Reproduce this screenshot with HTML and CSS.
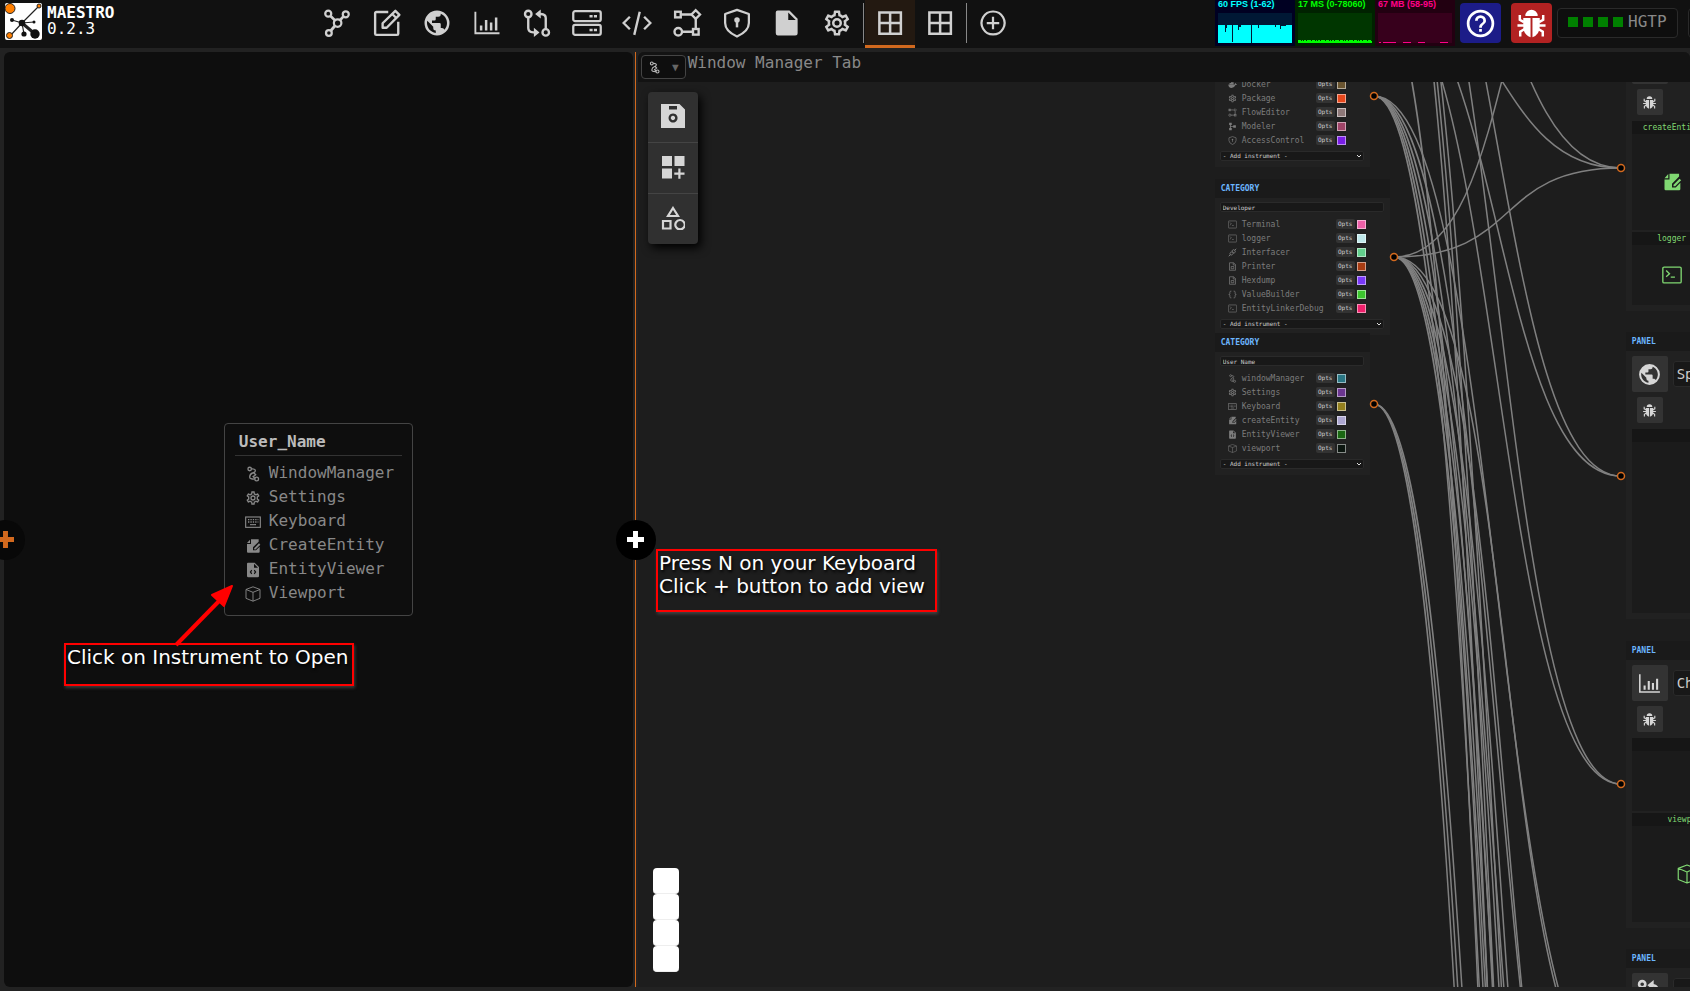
FILE: index.html
```html
<!DOCTYPE html>
<html lang="en">
<head>
    <meta charset="UTF-8">
    <meta name="viewport" content="width=device-width, initial-scale=1.0">
    <title>Maestro</title>
    <link rel="stylesheet" href="styles.css">
</head>
<body>
    <!-- icon set -->
    <svg class="defs" aria-hidden="true">
        <symbol id="i-graph" viewBox="0 0 24 24"><g fill="none" stroke="currentColor" stroke-width="1.8"><circle cx="5" cy="4.5" r="2.4"/><circle cx="19" cy="5" r="2.4"/><circle cx="12.500" cy="12" r="3"/><circle cx="5.500" cy="20" r="2.300"/><path d="M6.600 6.200l3.800 3.700M17.200 6.700l-2.700 3M10.400 14.200l-3.400 4" stroke-width="2.200"/></g></symbol>
        <symbol id="i-edit" viewBox="0 0 24 24"><g fill="none" stroke="currentColor" stroke-width="1.9" stroke-linejoin="round"><path d="M13 3.200H3.500a1 1 0 0 0-1 1v16.300a1 1 0 0 0 1 1H20a1 1 0 0 0 1-1V11"/><path d="M8.500 15.800v-3.600L18.700 2.300l3.200 3.200-10.200 10.300zM16.200 4.800l3.200 3.200"/></g></symbol>
        <symbol id="i-earth" viewBox="0 0 24 24"><path fill="currentColor" d="M17.9,17.39C17.64,16.59 16.89,16 16,16H15V13A1,1 0 0,0 14,12H8V10H10A1,1 0 0,0 11,9V7H13A2,2 0 0,0 15,5V4.59C17.93,5.77 20,8.64 20,12C20,14.08 19.2,15.97 17.9,17.39M11,19.93C7.05,19.44 4,16.08 4,12C4,11.38 4.08,10.78 4.21,10.21L9,15V16A2,2 0 0,0 11,18M12,2A10,10 0 0,0 2,12A10,10 0 0,0 12,22A10,10 0 0,0 22,12A10,10 0 0,0 12,2Z"/></symbol>
        <symbol id="i-chart" viewBox="0 0 24 24"><path fill="none" stroke="currentColor" stroke-width="1.5" d="M2.700 3v17.200H22"/><path fill="none" stroke="currentColor" stroke-width="2" d="M7.300 18v-4M11.300 18V9.500M15.300 18v-6.500M19.300 18V7.500"/></symbol>
        <symbol id="i-compare" viewBox="0 0 24 24"><g fill="none" stroke="currentColor" stroke-width="1.9"><circle cx="5" cy="4.800" r="2.600"/><circle cx="19" cy="19.500" r="2.600"/><path d="M5 7.500v8.500q0 3.300 4 3.500h2M19 16.700V8q0-3-4-3.200h-2"/></g><path fill="currentColor" d="M9.500 15.800l4.500 3.700-4.500 3.700zM15 1.200v7.200l-4.500-3.600z"/></symbol>
        <symbol id="i-server" viewBox="0 0 24 24"><g fill="none" stroke="currentColor" stroke-width="1.8"><rect x="1" y="2.500" width="22" height="8" rx="1.500"/><rect x="1" y="13.500" width="22" height="8" rx="1.500"/></g><path fill="currentColor" d="M14 5.500h2.500v2H14zM17.500 5.500H20v2h-2.500zM14 16.500h2.500v2H14zM17.500 16.500H20v2h-2.500z"/></symbol>
        <symbol id="i-code" viewBox="0 0 24 24"><path fill="none" stroke="currentColor" stroke-width="1.900" d="M6.300 7L1.300 12l5 5M17.700 7l5 5-5 5M14.200 3L9.800 21.500"/></symbol>
        <symbol id="i-flow" viewBox="0 0 24 24"><g fill="none" stroke="currentColor" stroke-width="1.900"><rect x="2.500" y="3" width="4.500" height="4.500"/><path d="M19 1.800l3.400 3.400L19 8.600l-3.400-3.400z"/><circle cx="5" cy="19" r="3"/><rect x="16.800" y="16.800" width="4.500" height="4.500"/><path d="M7 5.200h8.600M19 8.600v8.200M8 19h8.800"/></g></symbol>
        <symbol id="i-shield" viewBox="0 0 24 24"><path fill="none" stroke="currentColor" stroke-width="1.800" stroke-linejoin="round" d="M12 1.500l9.500 3.300v7.200q0 6.500-9.500 10.800Q2.500 18.500 2.500 12V4.800z"/><circle cx="12" cy="9.500" r="2.200" fill="currentColor"/><path fill="currentColor" d="M11 11h2v4.500h-2z"/></symbol>
        <symbol id="i-file" viewBox="0 0 24 24"><path fill="currentColor" fill-rule="evenodd" d="M4.500 2h9.500l6.500 6.500V20a2 2 0 0 1-2 2h-14a2 2 0 0 1-1.500-2V3.500A1.500 1.500 0 0 1 4.500 2zM13 3.500V9.500h6z"/></symbol>
        <symbol id="i-cog" viewBox="0 0 24 24"><path fill="currentColor" d="M12,8A4,4 0 0,1 16,12A4,4 0 0,1 12,16A4,4 0 0,1 8,12A4,4 0 0,1 12,8M12,10A2,2 0 0,0 10,12A2,2 0 0,0 12,14A2,2 0 0,0 14,12A2,2 0 0,0 12,10M10,22C9.75,22 9.54,21.82 9.5,21.58L9.13,18.93C8.5,18.68 7.96,18.34 7.44,17.94L4.95,18.95C4.73,19.03 4.46,18.95 4.34,18.73L2.34,15.27C2.21,15.05 2.27,14.78 2.46,14.63L4.57,12.97L4.5,12L4.57,11L2.46,9.37C2.27,9.22 2.21,8.95 2.34,8.73L4.34,5.27C4.46,5.05 4.73,4.96 4.95,5.05L7.44,6.05C7.96,5.66 8.5,5.32 9.13,5.07L9.5,2.42C9.54,2.18 9.75,2 10,2H14C14.25,2 14.46,2.18 14.5,2.42L14.87,5.07C15.5,5.32 16.04,5.66 16.56,6.05L19.05,5.05C19.27,4.96 19.54,5.05 19.66,5.27L21.66,8.73C21.79,8.95 21.73,9.22 21.54,9.37L19.43,11L19.5,12L19.43,13L21.54,14.63C21.73,14.78 21.79,15.05 21.66,15.27L19.66,18.73C19.54,18.95 19.27,19.04 19.05,18.95L16.56,17.95C16.04,18.34 15.5,18.68 14.87,18.93L14.5,21.58C14.46,21.82 14.25,22 14,22H10M11.25,4L10.88,6.61C9.68,6.86 8.62,7.5 7.85,8.39L5.44,7.35L4.69,8.65L6.8,10.2C6.4,11.37 6.4,12.64 6.8,13.8L4.68,15.36L5.43,16.66L7.86,15.62C8.63,16.5 9.68,17.14 10.87,17.38L11.24,20H12.76L13.13,17.39C14.32,17.14 15.37,16.5 16.14,15.62L18.57,16.66L19.32,15.36L17.2,13.81C17.6,12.64 17.6,11.37 17.2,10.2L19.31,8.65L18.56,7.35L16.15,8.39C15.38,7.5 14.32,6.86 13.12,6.62L12.75,4H11.25Z"/></symbol>
        <symbol id="i-grid" viewBox="0 0 24 24"><path fill="none" stroke="currentColor" stroke-width="2" d="M3.500 3.500h17.200v17H3.500zM12.100 3.500v17M3.500 12h17.200"/></symbol>
        <symbol id="i-add" viewBox="0 0 24 24"><path fill="none" stroke="currentColor" stroke-width="1.800" d="M12 7v10M7 12h10M12 2.800a9.200 9.200 0 1 0 .1 0z"/></symbol>
        <symbol id="i-help" viewBox="0 0 24 24"><path fill="currentColor" d="M11,18H13V16H11V18M12,2A10,10 0 0,0 2,12A10,10 0 0,0 12,22A10,10 0 0,0 22,12A10,10 0 0,0 12,2M12,20C7.59,20 4,16.41 4,12C4,7.59 7.59,4 12,4C16.41,4 20,7.59 20,12C20,16.41 16.41,20 12,20M12,6A4,4 0 0,0 8,10H10A2,2 0 0,1 12,8A2,2 0 0,1 14,10C14,12 11,11.75 11,15H13C13,12.75 16,12.5 16,10A4,4 0 0,0 12,6Z"/></symbol>
        <symbol id="i-bug" viewBox="0 0 24 24"><path fill="currentColor" d="M7.500 6.500a4.500 4.500 0 0 1 9 0zM6 8h5.300v14Q6 20 6 14zM18 8h-5.300v14Q18 20 18 14z"/><path fill="none" stroke="currentColor" stroke-width="1.800" d="M6.500 11L3.500 9.300V5.800M17.500 11l3-1.700V5.800M6.500 13.500H1.800M17.500 13.500h4.700M7 16l-3.200 2v3.500M17 16l3.200 2v3.500"/></symbol>
        <symbol id="i-winmgr" viewBox="0 0 24 24"><g fill="none" stroke="currentColor" stroke-width="2"><circle cx="7" cy="4.500" r="2.600"/><circle cx="17.500" cy="19.500" r="2.800"/><path d="M9.500 4.500q6-.5 6 2.500 0 2.500-4 3.500T7 16.500q0 3.500 7.500 3.300M12.500 9.500l3.500 3.500-3.500 3M11.500 15l3.500 4"/></g></symbol>
        <symbol id="i-keyboard" viewBox="0 0 24 24"><rect x="1" y="4.500" width="22" height="15.500" fill="none" stroke="currentColor" stroke-width="1.700"/><path stroke="currentColor" stroke-width="2" stroke-dasharray="2 1.600" d="M4.500 8.500h15.500M4.500 12h15.500"/><path stroke="currentColor" stroke-width="1.700" d="M7.500 16h9"/></symbol>
        <symbol id="i-create" viewBox="0 0 24 24"><path fill="currentColor" d="M9 2h11.500v3.500L12 14v4.500h4.500L22 13v7.500a1.500 1.500 0 0 1-1.500 1.500h-16A1.500 1.500 0 0 1 3 20.500V9h6zM7.500 2.500v5H3zM21 8l2 2-7.200 7.200h-2v-2z"/></symbol>
        <symbol id="i-viewer" viewBox="0 0 24 24"><path fill="currentColor" fill-rule="evenodd" d="M4.500 1h10l6.500 6.500V21a2 2 0 0 1-2 2H5a2 2 0 0 1-2-2V2.500A1.500 1.500 0 0 1 4.500 1zM13.500 2.500v6h6zM9.500 11.500L7 15l2.500 3.500 1.300-1.200L9.300 15l1.500-2.300zM14.500 11.500l-1.300 1.200 1.500 2.300-1.500 2.300 1.300 1.200L17 15z"/></symbol>
        <symbol id="i-cube" viewBox="0 0 24 24"><path fill="none" stroke="currentColor" stroke-width="1.400" stroke-linejoin="round" d="M12 1.200l10.500 4v13.300L12 22.800 1.500 18.500V5.200zM1.500 5.200L12 9.500l10.500-4.300M12 9.500v13.300"/></symbol>
        <symbol id="i-term" viewBox="0 0 24 24"><path fill="none" stroke="currentColor" stroke-width="1.600" d="M2.500 2.500h19a1.500 1.500 0 0 1 1.500 1.500v16a1.500 1.500 0 0 1-1.500 1.500h-19A1.500 1.500 0 0 1 1 20V4a1.500 1.500 0 0 1 1.500-1.500zM5 6.500l4 4-4 3.500M10.500 14.500h5"/></symbol>
        <symbol id="i-plug" viewBox="0 0 24 24"><path fill="none" stroke="currentColor" stroke-width="2.500" d="M2 22l4-4M22 2l-4 4M6 18q-2-4 1-6l2-2 5 5-2 2q-3 3-6 1zM18 6q-4-3-6 0l-2 2 6 6 2-2q3-3 0-6z"/></symbol>
        <symbol id="i-doc" viewBox="0 0 24 24"><path fill="none" stroke="currentColor" stroke-width="1.900" d="M4 2h11l5 5v15H4zM14 2v6h6M8.500 12h7v6h-7z"/></symbol>
        <symbol id="i-braces" viewBox="0 0 24 24"><path fill="none" stroke="currentColor" stroke-width="2" d="M9 3H7.500Q5 3 5 6v3q0 3-3 3 3 0 3 3v3q0 3 2.500 3H9M15 3h1.500Q19 3 19 6v3q0 3 3 3-3 0-3 3v3q0 3-2.500 3H15"/></symbol>
        <symbol id="i-docker" viewBox="0 0 24 24"><path fill="currentColor" d="M1 12h17q0-3 1.500-4 2 1 2 3 1.500-.5 2.500 0-1 2.500-4 2.500-3 7.500-10.500 7.500Q1 21 1 12zM4 8h11v3H4zM8 4h7v3H8z"/></symbol>
        <symbol id="i-modeler" viewBox="0 0 24 24"><path fill="currentColor" d="M3 2h7v6H7.500v3H14V8.500h7v7h-7V13H7.500v3H10v6H3v-6h2V8H3z"/></symbol>
        <symbol id="i-save" viewBox="0 0 24 24"><path fill="currentColor" fill-rule="evenodd" d="M0 0h18.500L24 5.500V24H0zM8 2v3.500h8V2zM12 9.500a4.500 4.500 0 1 0 .1 0zM12 11.800a2.200 2.200 0 1 1-.1 0z"/></symbol>
        <symbol id="i-widgets" viewBox="0 0 24 24"><path fill="currentColor" d="M1 1h10v10H1zM13.500 1h10v10h-10zM1 13.500h10v10H1zM17.300 13.500h2.200v4h4v2.200h-4v4h-2.200v-4h-4v-2.200h4z"/></symbol>
        <symbol id="i-shapes" viewBox="0 0 24 24"><path fill="none" stroke="currentColor" stroke-width="2.200" d="M12 2L17 10H7zM2 15h7.500v7.500H2zM19 14a4.700 4.700 0 1 0 .1 0z"/></symbol>
        <symbol id="i-plus" viewBox="0 0 24 24"><path fill="currentColor" d="M8.500 0h7v8.500H24v7h-8.500V24h-7v-8.500H0v-7h8.500z"/></symbol>
        <symbol id="i-merge" viewBox="0 0 24 24"><g fill="none" stroke="currentColor" stroke-width="2.500"><circle cx="5" cy="5" r="3"/><path d="M5 8v14M13 6h2q5 0 5 7v9"/></g><path fill="currentColor" d="M16 1v10l-6-5z"/></symbol>
    </svg>

    <header class="topbar">
        <div class="brand">
            <svg class="logo" viewBox="0 0 37 37">
                <rect width="37" height="37" rx="2" fill="#fff"/>
                <g stroke="#222" stroke-width="1.200"><path d="M17 20L34 3M17 20L5 33M17 20L7 17M17 20l12-1M17 20l2 11"/><path d="M17 20l13 11" stroke-width="3"/></g>
                <circle cx="17" cy="20" r="3.300" fill="#111"/><circle cx="30" cy="31" r="4.700" fill="#111"/><circle cx="19" cy="31" r="2.600" fill="#111"/><circle cx="7" cy="17" r="2" fill="#111"/><circle cx="29" cy="19" r="1.500" fill="#111"/>
                <g fill="#ff7f00" stroke="#222"><circle cx="5" cy="5.500" r="5"/><circle cx="34" cy="3" r="2"/><circle cx="4.500" cy="32.500" r="3"/></g>
            </svg>
            <div class="brand-text"><strong>MAESTRO</strong><span>0.2.3</span></div>
        </div>
        <nav class="tabs">
            <button class="tab" aria-label="Graph"><svg><use href="#i-graph"/></svg></button>
            <button class="tab" aria-label="Editor"><svg><use href="#i-edit"/></svg></button>
            <button class="tab" aria-label="Spatial"><svg><use href="#i-earth"/></svg></button>
            <button class="tab" aria-label="Charts"><svg><use href="#i-chart"/></svg></button>
            <button class="tab" aria-label="Compare"><svg><use href="#i-compare"/></svg></button>
            <button class="tab" aria-label="Servers"><svg><use href="#i-server"/></svg></button>
            <button class="tab" aria-label="Code"><svg><use href="#i-code"/></svg></button>
            <button class="tab" aria-label="Flow"><svg><use href="#i-flow"/></svg></button>
            <button class="tab" aria-label="Access"><svg><use href="#i-shield"/></svg></button>
            <button class="tab" aria-label="File"><svg><use href="#i-file"/></svg></button>
            <button class="tab" aria-label="Settings"><svg><use href="#i-cog"/></svg></button>
            <span class="sep"></span>
            <button class="tab active" aria-label="Window 1"><svg><use href="#i-grid"/></svg></button>
            <button class="tab" aria-label="Window 2"><svg><use href="#i-grid"/></svg></button>
            <span class="sep"></span>
            <button class="tab" aria-label="Add tab"><svg><use href="#i-add"/></svg></button>
        </nav>
        <div class="tools">
            <div class="stats">
                <div class="stat fps"><span>60 FPS (1-62)</span>
                    <svg viewBox="0 0 74 30"><path fill="currentColor" d="M0 12h7v7h1v-4h1v-3h5v17h1V12h5v5h1v-3h2v-2h10v18h1V12h6v3h1v-3h16v2h1v-2h4v4h1v-3h5v-1h6v18H0z"/></svg></div>
                <div class="stat ms"><span>17 MS (0-78060)</span>
                    <svg viewBox="0 0 74 30"><path fill="currentColor" d="M0 28h74v2H0z"/><path stroke="currentColor" stroke-dasharray="3 1 1 1 2 1 4 1" d="M0 27.500h74"/></svg></div>
                <div class="stat mb"><span>67 MB (58-95)</span>
                    <svg viewBox="0 0 74 30"><path fill="currentColor" d="M1 29h2v1H1zM5 29h13v1H5zM25 29h8v1h-8zM40 29h7v1h-7zM62 29h8v1h-8z"/></svg></div>
            </div>
            <button class="tool help" aria-label="Help"><svg><use href="#i-help"/></svg></button>
            <button class="tool bug" aria-label="Report bug"><svg><use href="#i-bug"/></svg></button>
            <div class="link"><i></i><i></i><i></i><i></i><span>HGTP</span></div>
            <div class="link more"></div>
        </div>
    </header>

    <main class="views">
        <section class="view empty">
            <div class="menu">
                <h2>User_Name</h2>
                <ul>
                    <li><a href="#"><svg><use href="#i-winmgr"/></svg>WindowManager</a></li>
                    <li><a href="#"><svg><use href="#i-cog"/></svg>Settings</a></li>
                    <li><a href="#"><svg><use href="#i-keyboard"/></svg>Keyboard</a></li>
                    <li><a href="#"><svg><use href="#i-create"/></svg>CreateEntity</a></li>
                    <li><a href="#"><svg><use href="#i-viewer"/></svg>EntityViewer</a></li>
                    <li><a href="#"><svg><use href="#i-cube"/></svg>Viewport</a></li>
                </ul>
            </div>
            <button class="add-view start" aria-label="Add view"><svg><use href="#i-plus"/></svg></button>
        </section>
        <div class="divider">
            <button class="add-view" aria-label="Add view"><svg><use href="#i-plus"/></svg></button>
        </div>
        <section class="view manager">
            <div class="view-bar">
                <button class="picker" aria-label="Instrument"><svg><use href="#i-winmgr"/></svg><span>▼</span></button>
                <span>Window Manager Tab</span>
            </div>
            <div class="canvas">
                <svg class="wires" id="wires"></svg>

                <div class="node category" style="left:577px;top:-43px">
                    <h3>CATEGORY</h3>
                    <input class="name" aria-label="Category name" value="Admin">
                    <div class="row"><svg><use href="#i-docker"/></svg><span>Docker</span><button>Opts</button><input type="color" aria-label="Docker color" value="#6b5530"></div>
                    <div class="row"><svg><use href="#i-cog"/></svg><span>Package</span><button>Opts</button><input type="color" aria-label="Package color" value="#e8481c"></div>
                    <div class="row"><svg><use href="#i-flow"/></svg><span>FlowEditor</span><button>Opts</button><input type="color" aria-label="FlowEditor color" value="#8e7878"></div>
                    <div class="row"><svg><use href="#i-modeler"/></svg><span>Modeler</span><button>Opts</button><input type="color" aria-label="Modeler color" value="#a04468"></div>
                    <div class="row"><svg><use href="#i-shield"/></svg><span>AccessControl</span><button>Opts</button><input type="color" aria-label="AccessControl color" value="#7a1ee6"></div>
                    <select aria-label="Add instrument"><option>- Add instrument -</option></select>
                </div>

                <div class="node category wide" style="left:577px;top:97px">
                    <h3>CATEGORY</h3>
                    <input class="name" aria-label="Category name" value="Developer">
                    <div class="row"><svg><use href="#i-term"/></svg><span>Terminal</span><button>Opts</button><input type="color" aria-label="Terminal color" value="#ee60a8"></div>
                    <div class="row"><svg><use href="#i-term"/></svg><span>logger</span><button>Opts</button><input type="color" aria-label="logger color" value="#bfe8ea"></div>
                    <div class="row"><svg><use href="#i-plug"/></svg><span>Interfacer</span><button>Opts</button><input type="color" aria-label="Interfacer color" value="#62cf8c"></div>
                    <div class="row"><svg><use href="#i-doc"/></svg><span>Printer</span><button>Opts</button><input type="color" aria-label="Printer color" value="#a83c12"></div>
                    <div class="row"><svg><use href="#i-doc"/></svg><span>Hexdump</span><button>Opts</button><input type="color" aria-label="Hexdump color" value="#7a38f8"></div>
                    <div class="row"><svg><use href="#i-braces"/></svg><span>ValueBuilder</span><button>Opts</button><input type="color" aria-label="ValueBuilder color" value="#3cc62e"></div>
                    <div class="row"><svg><use href="#i-term"/></svg><span>EntityLinkerDebug</span><button>Opts</button><input type="color" aria-label="EntityLinkerDebug color" value="#f0206c"></div>
                    <select aria-label="Add instrument"><option>- Add instrument -</option></select>
                </div>

                <div class="node category" style="left:577px;top:251px">
                    <h3>CATEGORY</h3>
                    <input class="name" aria-label="Category name" value="User_Name">
                    <div class="row"><svg><use href="#i-winmgr"/></svg><span>windowManager</span><button>Opts</button><input type="color" aria-label="windowManager color" value="#2a7684"></div>
                    <div class="row"><svg><use href="#i-cog"/></svg><span>Settings</span><button>Opts</button><input type="color" aria-label="Settings color" value="#6c3690"></div>
                    <div class="row"><svg><use href="#i-keyboard"/></svg><span>Keyboard</span><button>Opts</button><input type="color" aria-label="Keyboard color" value="#94801e"></div>
                    <div class="row"><svg><use href="#i-create"/></svg><span>createEntity</span><button>Opts</button><input type="color" aria-label="createEntity color" value="#aca6d0"></div>
                    <div class="row"><svg><use href="#i-viewer"/></svg><span>EntityViewer</span><button>Opts</button><input type="color" aria-label="EntityViewer color" value="#1a6812"></div>
                    <div class="row"><svg><use href="#i-cube"/></svg><span>viewport</span><button>Opts</button><input type="color" aria-label="viewport color" value="#0c1610"></div>
                    <select aria-label="Add instrument"><option>- Add instrument -</option></select>
                </div>

                <div class="node panel" style="left:988px;top:-58px">
                    <h3>PANEL</h3>
                    <div class="panel-head"><button class="icon" aria-label="Icon"><svg><use href="#i-edit"/></svg></button><input aria-label="Panel name" value="Edit"></div>
                    <button class="debug" aria-label="Debug"><svg><use href="#i-bug"/></svg></button>
                    <div class="cell narrow tall"><h4>createEntity</h4><svg><use href="#i-create"/></svg></div>
                    <div class="cell narrow"><h4>logger</h4><svg><use href="#i-term"/></svg></div>
                </div>
                <div class="node panel" style="left:988px;top:250px">
                    <h3>PANEL</h3>
                    <div class="panel-head"><button class="icon" aria-label="Icon"><svg><use href="#i-earth"/></svg></button><input aria-label="Panel name" value="Spatial"></div>
                    <button class="debug" aria-label="Debug"><svg><use href="#i-bug"/></svg></button>
                    <div class="cell"><h4></h4></div>
                </div>
                <div class="node panel" style="left:988px;top:559px">
                    <h3>PANEL</h3>
                    <div class="panel-head"><button class="icon" aria-label="Icon"><svg><use href="#i-chart"/></svg></button><input aria-label="Panel name" value="Charts"></div>
                    <button class="debug" aria-label="Debug"><svg><use href="#i-bug"/></svg></button>
                    <div class="cell"><h4></h4></div>
                    <div class="cell tall"><h4>viewport</h4><svg><use href="#i-cube"/></svg></div>
                </div>
                <div class="node panel" style="left:988px;top:867px">
                    <h3>PANEL</h3>
                    <div class="panel-head"><button class="icon" aria-label="Icon"><svg><use href="#i-merge"/></svg></button><input aria-label="Panel name" value=""></div>
                </div>

                <div class="toolbox">
                    <button aria-label="Save"><svg><use href="#i-save"/></svg></button>
                    <button aria-label="Add panel"><svg><use href="#i-widgets"/></svg></button>
                    <button aria-label="Add category"><svg><use href="#i-shapes"/></svg></button>
                </div>
                <div class="controls">
                    <button aria-label="Zoom in"></button>
                    <button aria-label="Zoom out"></button>
                    <button aria-label="Fit view"></button>
                    <button aria-label="Lock"></button>
                </div>
            </div>
        </section>
    </main>

    <!-- help notes over the views -->
    <svg class="arrow" viewBox="0 0 64 64"><path d="M4 60L50 13" stroke="#f00" stroke-width="4"/><path d="M60 1L52 21 40 10z" fill="#f00" stroke="#f00" stroke-width="2" stroke-linejoin="round"/></svg>
    <div class="note open-note">Click on Instrument to Open</div>
    <div class="note add-note">Press N on your Keyboard<br>Click + button to add view</div>

    <script src="wires.js"></script>
</body>
</html>
```
FILE: styles.css
```css
* {
    box-sizing: border-box;
}
body {
    margin: 0;
    height: 100vh;
    display: flex;
    flex-direction: column;
    background: #222;
    color: #fff;
    font-family: 'DejaVu Sans Mono', monospace;
    font-size: 16px;
    overflow: hidden;
}
button, input, select {
    font-family: inherit;
    margin: 0;
    padding: 0;
    border: 0;
    color: inherit;
}
h2, h3, h4, ul {
    margin: 0;
    padding: 0;
}
.defs {
    display: none;
}

/* top bar */
.topbar {
    flex: none;
    height: 48px;
    display: flex;
    background: #111;
    overflow: hidden;
}
.brand {
    display: flex;
    gap: 5px;
    padding: 3px 1px 0 5px;
}
.logo {
    width: 37px;
    height: 37px;
}
.brand-text {
    display: flex;
    flex-direction: column;
    line-height: 16px;
    padding-top: 2px;
}
.tabs {
    flex: 1;
    display: flex;
    justify-content: center;
}
.tab {
    width: 50px;
    height: 48px;
    display: grid;
    place-items: center;
    background: none;
    color: #d0d0d0;
    padding-bottom: 2px;
}
.tab svg {
    width: 30px;
    height: 30px;
}
.tab.active {
    background: #231911;
    border-bottom: 3px solid #d2691e;
    padding: 0;
}
.sep {
    width: 1px;
    height: 40px;
    margin: 3px 1px;
    background: #888;
}
.tools {
    display: flex;
}
.stats {
    display: flex;
    height: 46px;
}
.stat {
    width: 80px;
    padding: 0 3px 3px;
    display: flex;
    flex-direction: column;
    justify-content: space-between;
    font: bold 9px/9px 'Liberation Sans', Arial, sans-serif;
    white-space: nowrap;
}
.stat svg {
    height: 30px;
    width: 74px;
}
.fps { background: #002; color: #0ff; }
.ms { background: #020; color: #0f0; }
.mb { background: #201; color: #f08; }
.fps svg { background: #001835; }
.ms svg { background: #003600; }
.mb svg { background: #37001c; }
.tool {
    width: 41px;
    height: 40px;
    margin: 3px 5px;
    border-radius: 4px;
    display: grid;
    place-items: center;
}
.tool svg {
    width: 33px;
    height: 33px;
}
.help { background: #1c1c88; }
.bug { background: #b22222; }
.link {
    width: 121px;
    height: 30px;
    margin: 8px 10px 0 0;
    border: 1px solid #2a2a2a;
    border-radius: 4px;
    display: flex;
    align-items: center;
    gap: 5px;
    padding: 0 10px 4px;
    background: #0e0e0e;
    color: #888;
}
.link i {
    width: 10px;
    height: 10px;
    background: #008000;
    margin-top: 2px;
}
.link.more {
    margin-right: -119px;
}

/* views */
.views {
    flex: 1;
    min-height: 0;
    display: flex;
    padding: 4px 0 4px 4px;
}
.view {
    min-width: 0;
    position: relative;
    border-radius: 6px 6px 0 0;
}
.empty {
    flex: 374 0 0;
    display: grid;
    place-items: center;
    background: #0e0e0e;
    border-radius: 6px;
}
.manager {
    flex: 626 0 0;
    display: flex;
    flex-direction: column;
    background: #1d1d1d;
}
.divider {
    width: 5px;
    position: relative;
    display: flex;
    justify-content: center;
}
.divider::before {
    content: "";
    width: 1px;
    background: #d2691e;
}
.add-view {
    position: absolute;
    z-index: 2;
    top: calc(50% + 20px);
    left: 3px;
    width: 40px;
    height: 40px;
    transform: translate(-50%, -50%);
    border-radius: 50%;
    display: grid;
    place-items: center;
    background: #000;
    color: #fff;
}
.add-view svg {
    width: 17px;
    height: 17px;
}
.add-view.start {
    left: 1px;
    background: #080808;
    color: #d2691e;
}
.menu {
    width: 189px;
    height: 193px;
    padding: 8px 10px;
    border: 1px solid #444;
    border-radius: 4px;
}
.menu h2 {
    font-size: 16px;
    line-height: 20px;
    padding: 0 4px 3px;
    color: #bbb;
    border-bottom: 1px solid #333;
}
.menu ul {
    list-style: none;
    padding: 5px 0 0 10px;
}
.menu a {
    display: flex;
    align-items: center;
    gap: 8px;
    line-height: 24px;
    color: #888;
    text-decoration: none;
}
.menu svg {
    width: 16px;
    height: 16px;
    margin-top: 2px;
}

/* window manager */
.view-bar {
    flex: none;
    height: 30px;
    display: flex;
    gap: 2px;
    padding: 3px;
    background: #131313;
    border-radius: 6px 6px 0 0;
    line-height: 16px;
    color: #888;
}
.picker {
    width: 45px;
    height: 24px;
    display: flex;
    align-items: center;
    justify-content: space-between;
    padding: 0 6px;
    border: 1px solid #444;
    border-radius: 4px;
    background: #0e0e0e;
    color: #bbb;
}
.picker svg {
    width: 13px;
    height: 13px;
}
.picker span {
    font-size: 11px;
    color: #666;
}
.canvas {
    flex: 1;
    min-height: 0;
    position: relative;
    overflow: hidden;
}
.wires {
    position: absolute;
    inset: 0;
    width: 100%;
    height: 100%;
    z-index: 1;
}
.wires path {
    fill: none;
    stroke: #808080;
    stroke-width: 1.5px;
}
.wires circle {
    fill: #000;
    stroke: #d2691e;
    stroke-width: 1.5px;
}
.node {
    position: absolute;
    display: flex;
    flex-direction: column;
    background: #212121;
}
.node h3 {
    height: 19px;
    padding: 0 6px;
    font-size: 8px;
    line-height: 20px;
    color: #6cb6ff;
    background: #1a1a1a;
}
.category {
    width: 155px;
    padding-bottom: 6px;
}
.category.wide {
    width: 175px;
}
.category .name,
.category select {
    height: 10px;
    margin: 4px 6px 0 5px;
    border: 1px solid #2a2a2a;
    border-radius: 2px;
    background: #181818;
    color: #ccc;
    font-size: 6px;
    line-height: 8px;
    padding: 0 2px;
}
.category .name {
    margin-bottom: 5px;
}
.category select {
    appearance: none;
    background: #181818 url("data:image/svg+xml,%3Csvg xmlns='http://www.w3.org/2000/svg' viewBox='0 0 6 4'%3E%3Cpath d='M1 1l2 2 2-2' fill='none' stroke='%23ddd'/%3E%3C/svg%3E") no-repeat right 1px center / 6px 4px;
}
.row {
    height: 14px;
    display: flex;
    align-items: center;
    padding: 0 24px 0 13px;
    font-size: 8px;
    color: #7c7c7c;
}
.row svg {
    width: 9px;
    height: 9px;
    margin-right: 5px;
}
.row span {
    flex: 1;
}
.row button {
    width: 19px;
    height: 10px;
    margin-right: 2px;
    border-radius: 2px;
    background: #333;
    color: #ccc;
    font-size: 6px;
    line-height: 10px;
}
.row input {
    appearance: none;
    width: 9px;
    height: 9px;
    background: none;
}
.row input::-webkit-color-swatch-wrapper {
    padding: 0;
}
.row input::-webkit-color-swatch {
    border: 1px solid rgba(255, 255, 255, .5);
}
.panel {
    width: 240px;
    height: 287px;
    padding-bottom: 6px;
    gap: 2px;
}
.panel-head {
    display: flex;
    align-items: center;
    gap: 5px;
    padding: 3px 6px;
}
.panel .icon {
    width: 36px;
    height: 36px;
    border-radius: 2px;
    display: grid;
    place-items: center;
    background: #333;
    color: #d6d6d6;
}
.icon svg {
    width: 25px;
    height: 25px;
}
.panel-head input {
    width: 150px;
    height: 26px;
    padding: 0 3px;
    border: 1px solid #2a2a2a;
    border-radius: 3px;
    background: #181818;
    color: #ccc;
    font-size: 14px;
}
.debug {
    width: 26px;
    height: 26px;
    flex: none;
    margin: 0 0 4px 11px;
    border-radius: 2px;
    display: grid;
    place-items: center;
    background: #333;
    color: #d6d6d6;
}
.debug svg {
    width: 15px;
    height: 15px;
}
.cell {
    flex: 2 0 0;
    width: 110px;
    margin-left: 6px;
    display: flex;
    flex-direction: column;
    align-items: center;
    background: #1b1b1b;
    color: #80d872;
}
.cell.tall {
    flex-grow: 3;
}
.cell.narrow {
    width: 80px;
}
.cell h4 {
    width: 100%;
    height: 13px;
    font-size: 8px;
    font-weight: normal;
    line-height: 13px;
    text-align: center;
    background: #161616;
}
.cell svg {
    width: 20px;
    height: 20px;
    margin: auto;
}
.toolbox {
    position: absolute;
    z-index: 2;
    top: 10px;
    left: 10px;
    width: 50px;
    border-radius: 4px;
    overflow: hidden;
    background: #303030;
    box-shadow: 3px 4px 10px #000;
}
.toolbox button {
    width: 50px;
    height: 50px;
    display: grid;
    place-items: center;
    padding-bottom: 2px;
    background: none;
    color: #d6d6d6;
}
.toolbox button + button {
    height: 51px;
    border-top: 1px solid #444;
}
.toolbox svg {
    width: 24px;
    height: 24px;
}
.controls {
    position: absolute;
    z-index: 2;
    left: 15px;
    bottom: 15px;
    display: flex;
    flex-direction: column;
}
.controls button {
    width: 26px;
    height: 26px;
    background: #fff;
    border-bottom: 1px solid #eee;
    border-radius: 4px;
}

/* notes */
.note {
    position: absolute;
    z-index: 3;
    border: 2px solid #f00;
    padding: 1px;
    font-family: 'DejaVu Sans', sans-serif;
    font-size: 20px;
    line-height: 23px;
    white-space: nowrap;
    text-shadow: 1px 2px 3px #000;
    box-shadow: 1px 2px 3px rgba(128, 128, 128, .4);
}
.open-note {
    left: 64px;
    top: 643px;
    width: 290px;
    height: 43px;
}
.add-note {
    left: 656px;
    top: 549px;
    width: 281px;
    height: 63px;
}
.arrow {
    position: absolute;
    z-index: 3;
    left: 172px;
    top: 585px;
    width: 64px;
    height: 64px;
}
```
FILE: wires.js
```js
const svg = document.getElementById('wires');
const NS = 'http://www.w3.org/2000/svg';

// category outputs, each with the panel rows it is linked to
const sources = [
    { x: 736, y: -268, to: [0, 1, 2, 6, 7, 8] },
    { x: 736, y: -102, to: [0, 1, 2, 9] },
    { x: 736, y: 14, to: [3, 4, 5, 6, 7, 8] },
    { x: 756, y: 175, to: [-1, 0, 3, 4, 5, 6, 7, 8, 9] },
    { x: 736, y: 322, to: [9, 10, 11] }
];
const panelX = 983;
const panelY = n => 86 + n * 308;
const bend = 128;

function add(name, attrs) {
    const el = document.createElementNS(NS, name);
    for (const key in attrs) el.setAttribute(key, attrs[key]);
    svg.appendChild(el);
}

for (const s of sources) {
    for (const n of s.to) {
        const y = panelY(n);
        add('path', { d: `M${s.x} ${s.y}C${s.x + bend} ${s.y} ${panelX - bend} ${y} ${panelX} ${y}` });
    }
}
for (const s of sources) add('circle', { cx: s.x, cy: s.y, r: 3.5 });
for (let n = 0; n < 3; n++) add('circle', { cx: panelX, cy: panelY(n), r: 3.5 });
```
